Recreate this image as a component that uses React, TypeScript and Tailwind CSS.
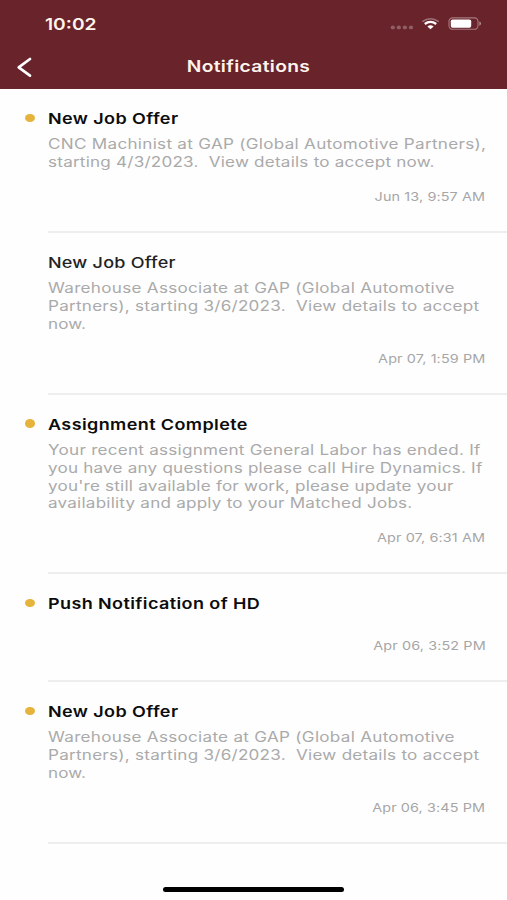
type Line = { text: string; tracking: string };
type Item = { title: string; lines: Line[]; date: string; unread: boolean };

const warehouseOffer: Line[] = [
  { text: "Warehouse Associate at GAP (Global Automotive", tracking: "tracking-[0.24px]" },
  { text: "Partners), starting 3/6/2023.  View details to accept", tracking: "tracking-[0.21px]" },
  { text: "now.", tracking: "tracking-[0.1px]" },
];

const items: Item[] = [
  {
    title: "New Job Offer",
    lines: [
      { text: "CNC Machinist at GAP (Global Automotive Partners),", tracking: "tracking-[0.24px]" },
      { text: "starting 4/3/2023.  View details to accept now.", tracking: "tracking-[0.18px]" },
    ],
    date: "Jun 13, 9:57 AM",
    unread: true,
  },
  { title: "New Job Offer", lines: warehouseOffer, date: "Apr 07, 1:59 PM", unread: false },
  {
    title: "Assignment Complete",
    lines: [
      { text: "Your recent assignment General Labor has ended. If", tracking: "tracking-[0.21px]" },
      { text: "you have any questions please call Hire Dynamics. If", tracking: "tracking-[0.17px]" },
      { text: "you're still available for work, please update your", tracking: "tracking-[0.17px]" },
      { text: "availability and apply to your Matched Jobs.", tracking: "tracking-[0.18px]" },
    ],
    date: "Apr 07, 6:31 AM",
    unread: true,
  },
  { title: "Push Notification of HD", lines: [], date: "Apr 06, 3:52 PM", unread: true },
  { title: "New Job Offer", lines: warehouseOffer, date: "Apr 06, 3:45 PM", unread: true },
];

function StatusIcons() {
  return (
    <svg width="94" height="18" viewBox="0 0 94 18" fill="none">
      <g fill="#fff" fillOpacity="0.27">
        <ellipse cx="5.8" cy="13.4" rx="2.1" ry="1.9" />
        <ellipse cx="11.8" cy="13.4" rx="2.1" ry="1.9" />
        <ellipse cx="17.9" cy="13.4" rx="2.1" ry="1.9" />
        <ellipse cx="24" cy="13.4" rx="2.1" ry="1.9" />
      </g>
      <path d="M35.3 7.6Q43.5 1.8 51.7 7.6" stroke="#fff" strokeOpacity="0.35" strokeWidth="1.6" />
      <path d="M37.8 10Q43.5 5.8 49.2 10" stroke="#fff" strokeWidth="2.3" />
      <path d="M40.4 12.4Q43.5 10.2 46.6 12.4L43.5 15.2Z" fill="#fff" />
      <rect x="62" y="3.9" width="29" height="11.4" rx="3.6" stroke="#fff" strokeOpacity="0.4" strokeWidth="1.1" />
      <rect x="63.8" y="5.4" width="20.4" height="8.4" rx="1.8" fill="#fff" />
      <path d="M92.3 7.6Q94.2 8.4 94.2 9.6T92.3 11.7Z" fill="#fff" fillOpacity="0.45" />
    </svg>
  );
}

function Row({ item }: { item: Item }) {
  return (
    <li className="flex">
      <div className="flex w-12 shrink-0 justify-end pt-[24.5px] pr-[13px]">
        {item.unread && <span className="h-[8.5px] w-[10px] rounded-[50%] bg-[#e6b43c]" />}
      </div>
      <div className="flex grow flex-col border-b-2 border-[#eeeeee] pt-5 pr-[21.5px] pb-[24.8px]">
        <h2
          className={`h-5 w-fit origin-left scale-x-[1.2] text-[15px] leading-5 whitespace-pre ${
            item.unread
              ? "font-semibold tracking-[0.33px] text-[#0c0c0c]"
              : "font-medium tracking-[0.2px] text-[#222222]"
          }`}
        >
          {item.title}
        </h2>
        <div className="mt-[6.2px] w-0 origin-left scale-x-[1.22] text-[14px] leading-[17.9px] text-[#aaaaaa]">
          {item.lines.map((line) => (
            <p key={line.text} className={`w-fit whitespace-pre ${line.tracking}`}>
              {line.text}
            </p>
          ))}
        </div>
        <time className="mt-[17px] h-[18px] w-fit origin-right scale-x-[1.2] self-end text-[12px] leading-[18px] tracking-[0.1px] whitespace-pre text-[#a6a6a6]">
          {item.date}
        </time>
      </div>
    </li>
  );
}

export default function App() {
  return (
    <div className="flex h-[900px] w-[507px] flex-col overflow-hidden bg-[#fefefe] font-['Inter','Liberation_Sans',sans-serif]">
      <header className="flex h-[89px] shrink-0 flex-col bg-[#69232b] text-[#fff4ec]">
        <div className="flex h-[46px] items-center justify-between pr-[26px] pl-[45px]">
          <span className="mt-px origin-left scale-x-[1.2] text-[16px] leading-5 font-semibold">10:02</span>
          <StatusIcons />
        </div>
        <div className="grid h-[40px] grid-cols-[1fr_auto_1fr] items-center">
          <svg width="40" height="24" viewBox="0 0 40 24" fill="none" className="mt-0.5">
            <path d="M30 4L18.7 12.3L30 20.6" stroke="#fff" strokeWidth="2.7" strokeLinecap="round" strokeLinejoin="round" />
          </svg>
          <h1 className="mr-[11px] scale-x-[1.2] text-[16px] leading-5 font-semibold tracking-[0.3px]">
            Notifications
          </h1>
        </div>
      </header>
      <ul className="flex flex-col">
        {items.map((item, i) => (
          <Row key={i} item={item} />
        ))}
      </ul>
      <div className="mt-auto mb-2 ml-[163px] h-[5.5px] w-[181px] shrink-0 rounded-full bg-black" />
    </div>
  );
}
